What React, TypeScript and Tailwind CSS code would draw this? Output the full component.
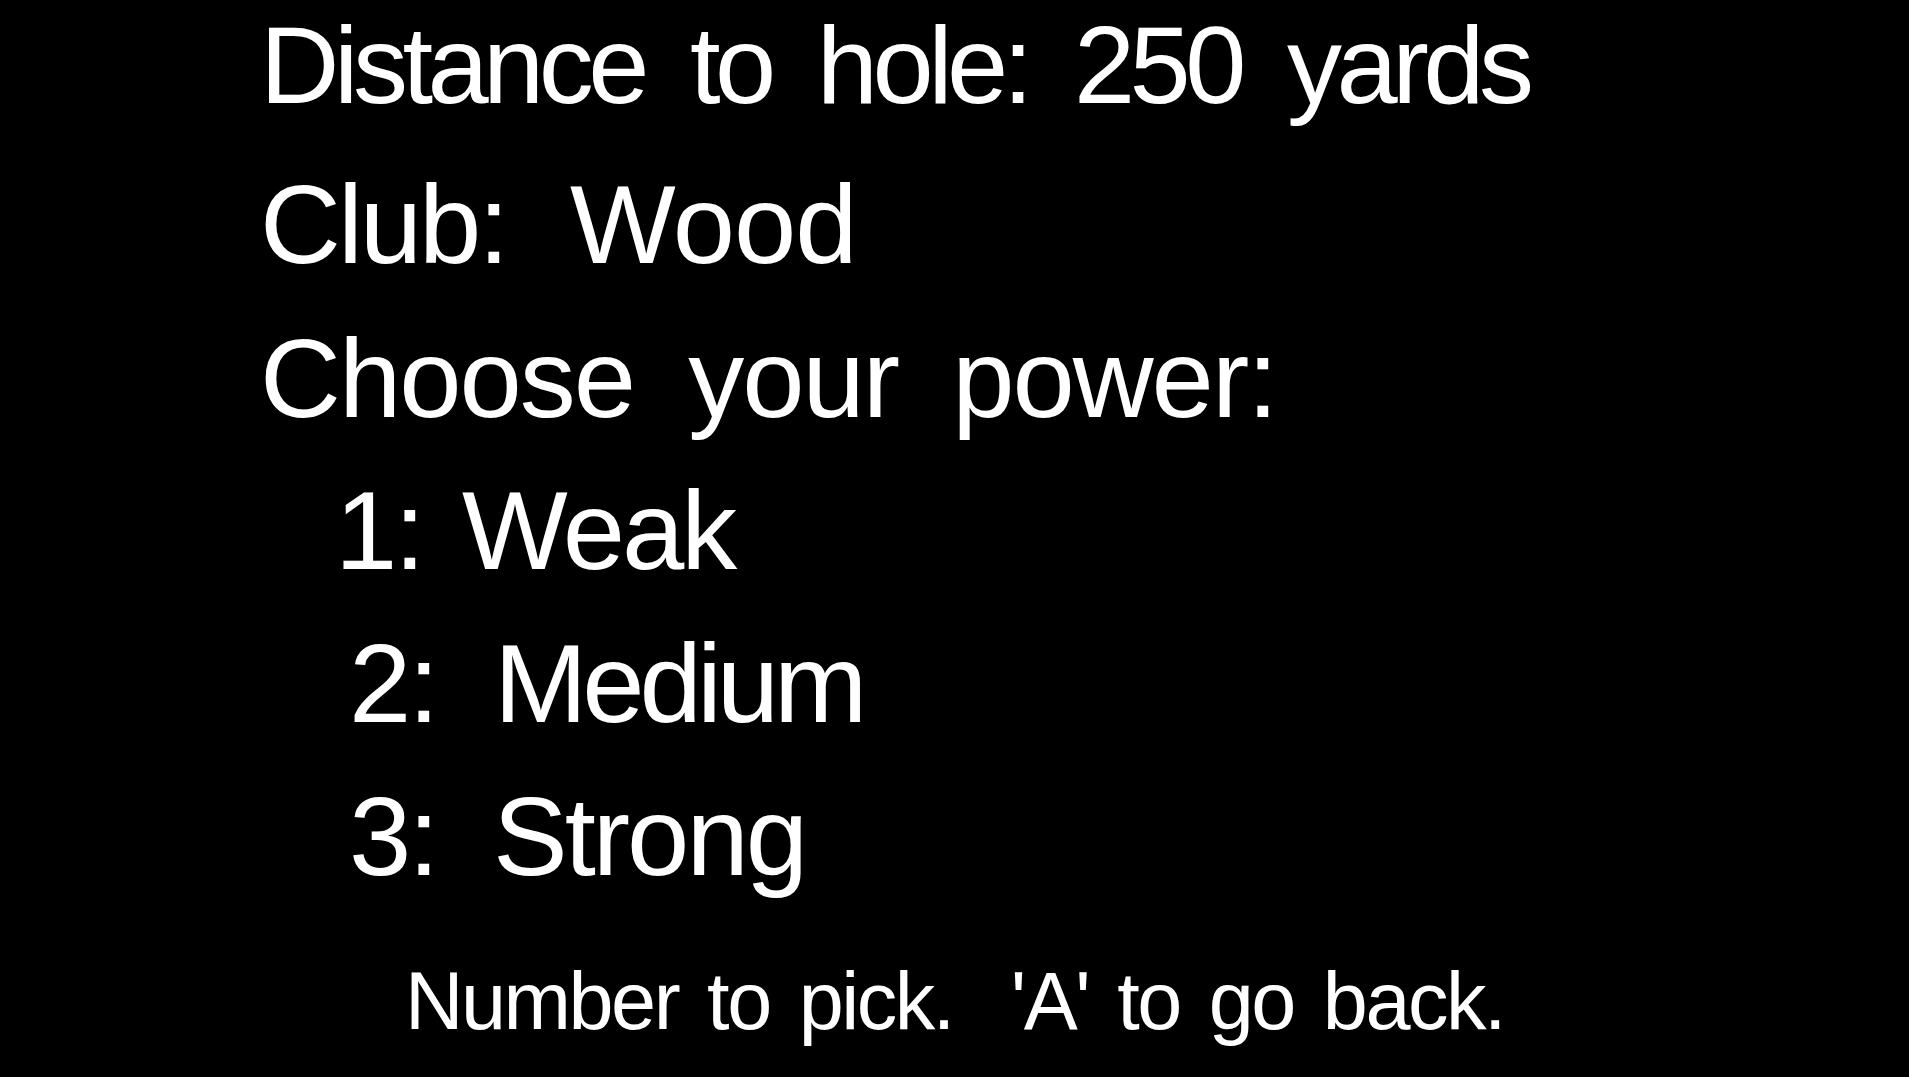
export default function App() {
  return (
    <div className="w-screen h-[1077px] overflow-hidden bg-black text-white font-['Liberation_Sans',_Arial,_sans-serif]">
      <div className="flex flex-col pt-[10px] pl-[260px]">
        <div className="text-[110px] leading-none tracking-[-5.5px] [word-spacing:21px] whitespace-pre">
          Distance to hole: 250 yards
        </div>
        <div className="mt-[49px] flex text-[112px] leading-none">
          <span className="w-[310px] tracking-[-3px]">Club:</span>
          <span className="tracking-[-1px]">Wood</span>
        </div>
        <div className="mt-[42px] text-[112px] leading-none tracking-[-2px] [word-spacing:25px] whitespace-pre">
          Choose your power:
        </div>

        {/* power options */}
        <div className="mt-[40px] flex text-[112px] leading-none tracking-[-3px] pl-[75px]">
          <span className="w-[127px]">1:</span>
          <span>Weak</span>
        </div>
        <div className="mt-[41px] flex text-[112px] leading-none tracking-[-3px] pl-[89px]">
          <span className="w-[145px]">2:</span>
          <span className="tracking-[-5px]">Medium</span>
        </div>
        <div className="mt-[41px] flex text-[112px] leading-none tracking-[-3px] pl-[89px]">
          <span className="w-[144px]">3:</span>
          <span>Strong</span>
        </div>
      </div>

      <div className="mt-[68px] text-center text-[81px] leading-none tracking-[-2.5px] [word-spacing:9px] whitespace-pre">
        Number to pick.  'A' to go back.
      </div>
    </div>
  );
}
